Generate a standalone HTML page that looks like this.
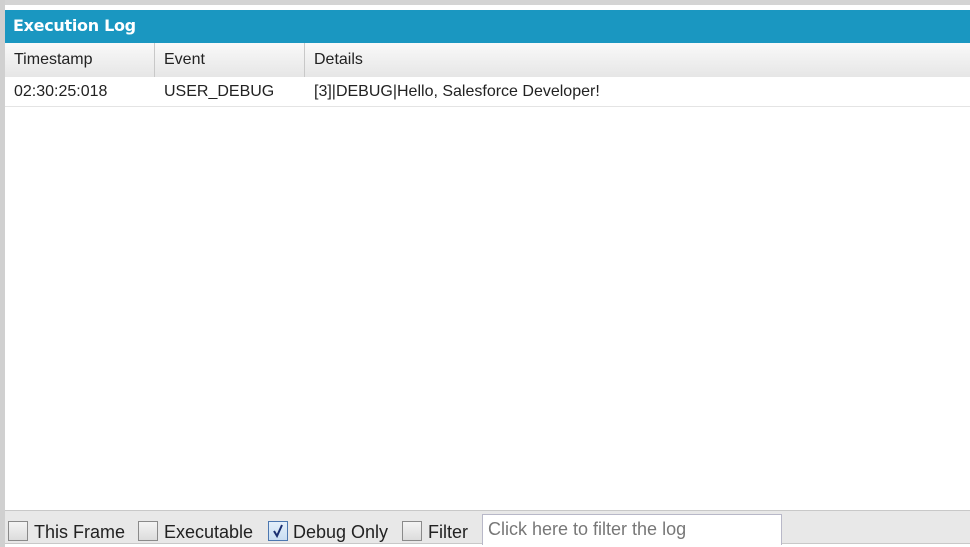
<!DOCTYPE html>
<html><head><style>
*{margin:0;padding:0;box-sizing:border-box}
body{width:970px;height:547px;background:#fff;position:relative;overflow:hidden;font-family:"Liberation Sans",sans-serif}
.lstrip{position:absolute;left:0;top:0;width:5px;height:547px;background:#d0d0d0}
.tstrip{position:absolute;left:0;top:0;width:970px;height:5px;background:#d4d4d4}
.hdr{position:absolute;left:5px;top:10px;width:965px;height:33px;background:#1a97c1;color:#fff;font-weight:bold;font-size:16px;line-height:31px;padding-left:8px;font-family:"DejaVu Sans",sans-serif;letter-spacing:-0.3px}
.cols{position:absolute;left:5px;top:43px;width:965px;height:34px;background:linear-gradient(#f9f9f9,#e6e6e6);font-size:16px;color:#222;line-height:34px}
.cols div,.row div{position:absolute;top:0;padding-left:9px}
.cols div{border-left:1px solid #c8c8c8;height:34px}
.row{position:absolute;left:5px;top:77px;width:965px;height:30px;border-bottom:1px solid #e4e4e4;font-size:16px;color:#222;line-height:29px}
.ftr{position:absolute;left:5px;top:510px;width:965px;height:34px;background:#e8e8e8;border-top:1px solid #c8c8c8;border-bottom:1px solid #c8c8c8;font-size:18px;color:#222}
.cb{position:absolute;top:10px;width:20px;height:20px;border:1px solid #8a8a8a;background:linear-gradient(#f4f4f4,#dcdcdc)}
.cb.on{border-color:#4c77b0;background:linear-gradient(#e4f0fb,#c9ddf2)}
.lb{position:absolute;top:10px;line-height:22px}
.inp{position:absolute;left:477px;top:3px;width:300px;height:31px;background:#fff;border:1px solid #b8b8c8;border-bottom:none;font-size:18px;color:#777;padding-left:5px;line-height:29px}
</style></head><body>
<div class="tstrip"></div><div class="lstrip"></div>
<div class="hdr">Execution Log</div>
<div class="cols"><div style="left:0;border:none">Timestamp</div><div style="left:149px">Event</div><div style="left:299px">Details</div></div>
<div class="row"><div style="left:0">02:30:25:018</div><div style="left:150px">USER_DEBUG</div><div style="left:300px">[3]|DEBUG|Hello, Salesforce Developer!</div></div>
<div class="ftr">
<div class="cb" style="left:3px"></div><div class="lb" style="left:29px">This Frame</div>
<div class="cb" style="left:133px"></div><div class="lb" style="left:159px">Executable</div>
<div class="cb on" style="left:263px"><svg width="18" height="18" viewBox="0 0 18 18" style="position:absolute;left:0;top:0"><path d="M5 9 L8 14 L13 3" fill="none" stroke="#1a2f70" stroke-width="2"/></svg></div><div class="lb" style="left:288px">Debug Only</div>
<div class="cb" style="left:397px"></div><div class="lb" style="left:423px">Filter</div>
<div class="inp">Click here to filter the log</div>
</div>
</body></html>
